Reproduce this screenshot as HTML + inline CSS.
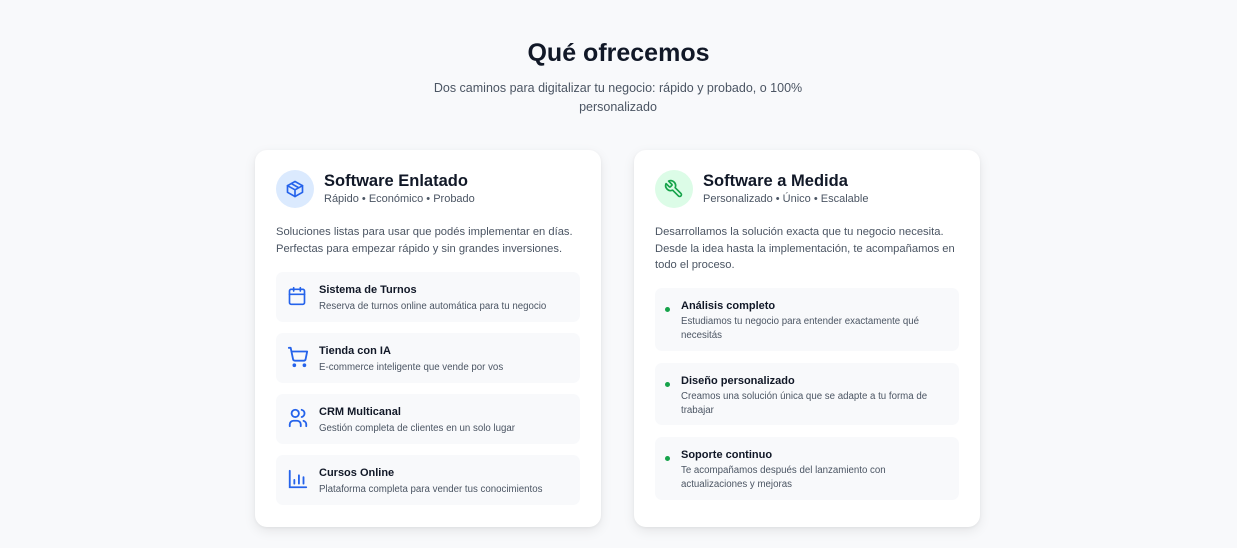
<!DOCTYPE html>
<html><head><meta charset="utf-8"><style>
*{box-sizing:border-box;margin:0;padding:0}
body{width:1237px;height:548px;background:#f8f9fb;font-family:"Liberation Sans",Arial,sans-serif;color:#111827;position:relative;overflow:hidden}
h1{position:absolute;top:39px;left:0;width:1237px;text-align:center;font-size:25px;font-weight:700;color:#111827}
.sub{position:absolute;top:79px;left:418px;width:400px;text-align:center;font-size:12.5px;line-height:19px;color:#4b5563}
.card{position:absolute;top:150px;width:346px;height:377px;background:#fff;border-radius:12px;box-shadow:0 4px 12px rgba(0,0,0,.08),0 1px 3px rgba(0,0,0,.05);padding:21px}
.ic{position:absolute;left:21px;top:20px;width:38px;height:38px;border-radius:50%;display:flex;align-items:center;justify-content:center}
.t{position:absolute;left:69px;top:22px;font-size:16.5px;font-weight:700}
.st{position:absolute;left:69px;top:43px;font-size:11px;color:#4b5563}
.d{position:absolute;left:21px;top:74px;width:312px;font-size:11.2px;line-height:16.5px;color:#4b5563}
.it{position:absolute;left:21px;width:304px;background:#f8f9fb;border-radius:7px}
.it .h{font-size:11px;font-weight:700;color:#111827}
.it .p{font-size:9.7px;color:#4b5563;line-height:13.5px}
.L .it{height:50px}
.L .it svg{position:absolute;left:11px;top:13px}
.L .it .h{position:absolute;left:43px;top:12px}
.L .it .p{position:absolute;left:43px;top:28px}
.R .it .dot{position:absolute;left:10px;top:19px;width:5px;height:5px;border-radius:50%;background:#16a34a}
.R .it .h{position:absolute;left:26px;top:12px}
.R .it .p{position:absolute;left:26px;top:27px;width:255px}
</style></head><body>
<h1>Qué ofrecemos</h1>
<div class="sub">Dos caminos para digitalizar tu negocio: rápido y probado, o 100% personalizado</div>

<div class="card L" style="left:255px">
<div class="ic" style="background:#dbeafe"><svg width="20" height="20" viewBox="0 0 24 24" fill="none" stroke="#2563eb" stroke-width="2" stroke-linecap="round" stroke-linejoin="round"><path d="M21 8l-9-5-9 5v8l9 5 9-5z"/><path d="M3 8l9 5 9-5M12 13v8M7.5 5.5l9 5"/></svg></div>
<div class="t">Software Enlatado</div>
<div class="st">Rápido • Económico • Probado</div>
<div class="d">Soluciones listas para usar que podés implementar en días. Perfectas para empezar rápido y sin grandes inversiones.</div>
<div class="it" style="top:122px"><svg width="20" height="22" viewBox="0 0 24 24" fill="none" stroke="#2563eb" stroke-width="2" stroke-linecap="round"><rect x="3" y="4" width="18" height="18" rx="2"/><path d="M16 2v4M8 2v4M3 10h18"/></svg><div class="h">Sistema de Turnos</div><div class="p">Reserva de turnos online automática para tu negocio</div></div>
<div class="it" style="top:183px"><svg width="22" height="22" viewBox="0 0 24 24" fill="none" stroke="#2563eb" stroke-width="2" stroke-linecap="round" stroke-linejoin="round"><circle cx="8" cy="21" r="1"/><circle cx="19" cy="21" r="1"/><path d="M2 2h2l2.6 12.4a2 2 0 0 0 2 1.6h9.7a2 2 0 0 0 2-1.6L22 6H5"/></svg><div class="h">Tienda con IA</div><div class="p">E-commerce inteligente que vende por vos</div></div>
<div class="it" style="top:244px"><svg width="22" height="22" viewBox="0 0 24 24" fill="none" stroke="#2563eb" stroke-width="2" stroke-linecap="round"><circle cx="9" cy="7" r="4"/><path d="M3 21v-2a4 4 0 0 1 4-4h4a4 4 0 0 1 4 4v2M16 3.1a4 4 0 0 1 0 7.8M21 21v-2a4 4 0 0 0-3-3.9"/></svg><div class="h">CRM Multicanal</div><div class="p">Gestión completa de clientes en un solo lugar</div></div>
<div class="it" style="top:305px"><svg width="22" height="22" viewBox="0 0 24 24" fill="none" stroke="#2563eb" stroke-width="2" stroke-linecap="round"><path d="M3 3v18h18M8 17v-4M13 17V8M18 17v-7"/></svg><div class="h">Cursos Online</div><div class="p">Plataforma completa para vender tus conocimientos</div></div>
</div>

<div class="card R" style="left:634px">
<div class="ic" style="background:#dcfce7"><svg width="20" height="20" viewBox="0 0 24 24" fill="none" stroke="#16a34a" stroke-width="2" stroke-linecap="round" stroke-linejoin="round" transform="scale(-1,1)"><path d="M14.7 6.3a1 1 0 0 0 0 1.4l1.6 1.6a1 1 0 0 0 1.4 0l3.8-3.8a6 6 0 0 1-7.9 7.9l-6.9 6.9a2.1 2.1 0 0 1-3-3l6.9-6.9a6 6 0 0 1 7.9-7.9z"/></svg></div>
<div class="t">Software a Medida</div>
<div class="st">Personalizado • Único • Escalable</div>
<div class="d">Desarrollamos la solución exacta que tu negocio necesita. Desde la idea hasta la implementación, te acompañamos en todo el proceso.</div>
<div class="it" style="top:138px;height:63px"><div class="dot"></div><div class="h">Análisis completo</div><div class="p">Estudiamos tu negocio para entender exactamente qué necesitás</div></div>
<div class="it" style="top:213px;height:62px"><div class="dot"></div><div class="h">Diseño personalizado</div><div class="p">Creamos una solución única que se adapte a tu forma de trabajar</div></div>
<div class="it" style="top:287px;height:63px"><div class="dot"></div><div class="h">Soporte continuo</div><div class="p">Te acompañamos después del lanzamiento con actualizaciones y mejoras</div></div>
</div>
</body></html>
